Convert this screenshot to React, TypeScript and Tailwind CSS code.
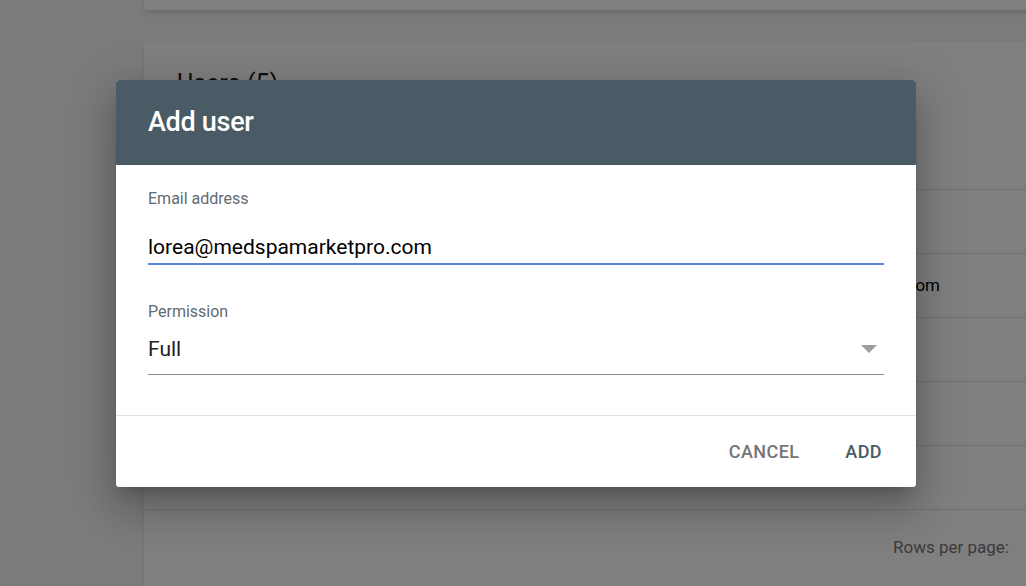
const rows = [
  { left: '', right: '' },
  { left: '', right: 'lorea@medspamarketpro.com' },
  { left: '', right: '' },
  { left: '', right: '' },
  { left: 'jeppy@spa.com', right: '' },
];

const UsersCard = () => (
  <div className="bg-white rounded-sm shadow-md mt-[42px] ml-[144px] w-[1000px] h-[600px]">
    <div className="h-[84px] pl-[33px] pt-[23px]">
      <h2 className="text-[25px] text-[#212121]">Users (5)</h2>
    </div>
    <div className="h-[64px] border-b border-[#e0e0e0]" />
    {rows.map((row, i) => (
      <div
        key={i}
        className="h-[64px] border-b border-[#e0e0e0] flex items-center text-[17px] text-black"
      >
        <span className="pl-[89px] w-[400px]">{row.left}</span>
        <span className="w-[396px] flex justify-end">{row.right}</span>
      </div>
    ))}
    <div className="h-[76px] flex items-center pl-[749px] text-[17px] text-[#757575]">
      Rows per page:
    </div>
  </div>
);

export default function App() {
  return (
    <div
      className="relative w-[1026px] h-[586px] overflow-hidden bg-[#f5f6f8]"
      style={{ fontFamily: 'Roboto, "Liberation Sans", sans-serif' }}
    >
      <div className="absolute left-[144px] top-[-200px] w-[1000px] h-[210px] bg-white rounded-sm shadow-md" />
      <UsersCard />

      <div className="absolute inset-0 bg-black/50 flex justify-center items-start">
        <div className="mt-[80px] ml-[6px] w-[800px] bg-white rounded-[3px] shadow-[0_11px_15px_-7px_rgba(0,0,0,0.2),0_24px_38px_3px_rgba(0,0,0,0.14),0_9px_46px_8px_rgba(0,0,0,0.12)] overflow-hidden">
          <div className="h-[85px] bg-[#4a5b65] flex items-center px-8">
            <h1 className="text-[27px] font-medium text-white tracking-[-0.3px]">Add user</h1>
          </div>

          <div className="px-8 pt-[24px] h-[251px] border-b border-[#e0e0e0]">
            <label className="block text-[16px] text-[#5f6b73] leading-[20px]">Email address</label>
            <div className="mt-[25px] border-b-2 border-[#5b87d8] pb-[2px]">
              <span className="text-[21px] text-black leading-[26px]">lorea@medspamarketpro.com</span>
            </div>

            <label className="block mt-[37px] text-[16px] text-[#5f6b73] leading-[20px]">Permission</label>
            <div className="mt-[14px] border-b border-[#8a8a8a] pb-[12px] flex items-center justify-between">
              <span className="text-[21px] text-[#212121] leading-[26px]">Full</span>
              <svg width="16" height="8" viewBox="0 0 16 8" className="mr-[7px]">
                <path d="M0 0 L16 0 L8 8 Z" fill="#9e9e9e" />
              </svg>
            </div>
          </div>

          <div className="h-[71px] flex items-center justify-end pr-[34px] gap-[46px]">
            <button className="text-[18px] font-medium text-[#757575] tracking-[0.4px]">CANCEL</button>
            <button className="text-[18px] font-medium text-[#4a5b65] tracking-[0.4px]">ADD</button>
          </div>
        </div>
      </div>
    </div>
  );
}
